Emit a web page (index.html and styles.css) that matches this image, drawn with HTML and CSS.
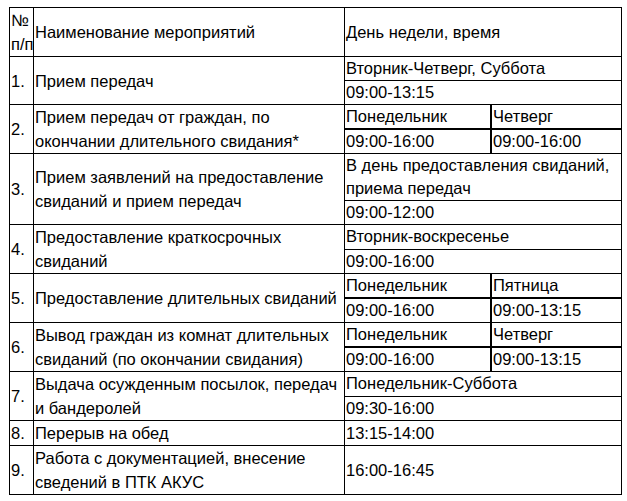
FILE: index.html
```html
<!DOCTYPE html>
<html lang="ru">
<head>
<meta charset="utf-8">
<title>Расписание</title>
<link rel="stylesheet" href="styles.css">
</head>
<body>
<table class="schedule">
  <colgroup>
    <col class="c-num">
    <col class="c-name">
    <col class="c-day">
    <col class="c-day2">
  </colgroup>
  <tbody>
    <tr class="head">
      <td class="num">№<br>п/п</td>
      <td class="name">Наименование мероприятий</td>
      <td class="time" colspan="2">День недели, время</td>
    </tr>

    <tr>
      <td class="num" rowspan="2">1.</td>
      <td class="name" rowspan="2">Прием передач</td>
      <td class="time" colspan="2">Вторник-Четверг, Суббота</td>
    </tr>
    <tr>
      <td class="time" colspan="2">09:00-13:15</td>
    </tr>

    <tr>
      <td class="num" rowspan="2">2.</td>
      <td class="name" rowspan="2">Прием передач от граждан, по<br>окончании длительного свидания*</td>
      <td class="time split-l split-t">Понедельник</td>
      <td class="time split-t">Четверг</td>
    </tr>
    <tr>
      <td class="time split-l">09:00-16:00</td>
      <td class="time">09:00-16:00</td>
    </tr>

    <tr>
      <td class="num" rowspan="2">3.</td>
      <td class="name" rowspan="2">Прием заявлений на предоставление<br>свиданий и прием передач</td>
      <td class="time" colspan="2">В день предоставления свиданий,<br>приема передач</td>
    </tr>
    <tr>
      <td class="time" colspan="2">09:00-12:00</td>
    </tr>

    <tr>
      <td class="num" rowspan="2">4.</td>
      <td class="name" rowspan="2">Предоставление краткосрочных<br>свиданий</td>
      <td class="time" colspan="2">Вторник-воскресенье</td>
    </tr>
    <tr>
      <td class="time" colspan="2">09:00-16:00</td>
    </tr>

    <tr>
      <td class="num" rowspan="2">5.</td>
      <td class="name" rowspan="2">Предоставление длительных свиданий</td>
      <td class="time split-l split-t">Понедельник</td>
      <td class="time split-t">Пятница</td>
    </tr>
    <tr>
      <td class="time split-l">09:00-16:00</td>
      <td class="time">09:00-13:15</td>
    </tr>

    <tr>
      <td class="num" rowspan="2">6.</td>
      <td class="name" rowspan="2">Вывод граждан из комнат длительных<br>свиданий (по окончании свидания)</td>
      <td class="time split-l split-t">Понедельник</td>
      <td class="time split-t">Четверг</td>
    </tr>
    <tr>
      <td class="time split-l">09:00-16:00</td>
      <td class="time">09:00-13:15</td>
    </tr>

    <tr>
      <td class="num" rowspan="2">7.</td>
      <td class="name" rowspan="2">Выдача осужденным посылок, передач<br>и бандеролей</td>
      <td class="time" colspan="2">Понедельник-Суббота</td>
    </tr>
    <tr>
      <td class="time" colspan="2">09:30-16:00</td>
    </tr>

    <tr>
      <td class="num">8.</td>
      <td class="name">Перерыв на обед</td>
      <td class="time" colspan="2">13:15-14:00</td>
    </tr>

    <tr>
      <td class="num">9.</td>
      <td class="name">Работа с документацией, внесение<br>сведений в ПТК АКУС</td>
      <td class="time" colspan="2">16:00-16:45</td>
    </tr>
  </tbody>
</table>
</body>
</html>
```

FILE: styles.css
```css
html, body {
  margin: 0;
  padding: 0;
  background: #ffffff;
}

body {
  font-family: "Liberation Sans", Arial, sans-serif;
  font-size: 16.5px;
  color: #000000;
}

.schedule {
  margin: 7px 0 0 9px;
  border-collapse: separate;
  border-spacing: 0;
  table-layout: fixed;
  width: 613px;
  border-left: 1px solid #000;
  border-top: 1px solid #000;
}

.c-num { width: 24px; }
.c-name { width: 311px; }
.c-day { width: 147px; }
.c-day2 { width: 130px; }

.schedule td {
  box-sizing: border-box;
  border-right: 1px solid #000;
  border-bottom: 1px solid #000;
  padding: 0 0 0 1px;
  vertical-align: middle;
  white-space: nowrap;
  overflow: hidden;
}

.num,
.name {
  line-height: 24px;
}

.time {
  line-height: 23px;
}

.split-l {
  border-right-width: 2px !important;
}

.split-t {
  border-bottom-width: 2px !important;
}
```
